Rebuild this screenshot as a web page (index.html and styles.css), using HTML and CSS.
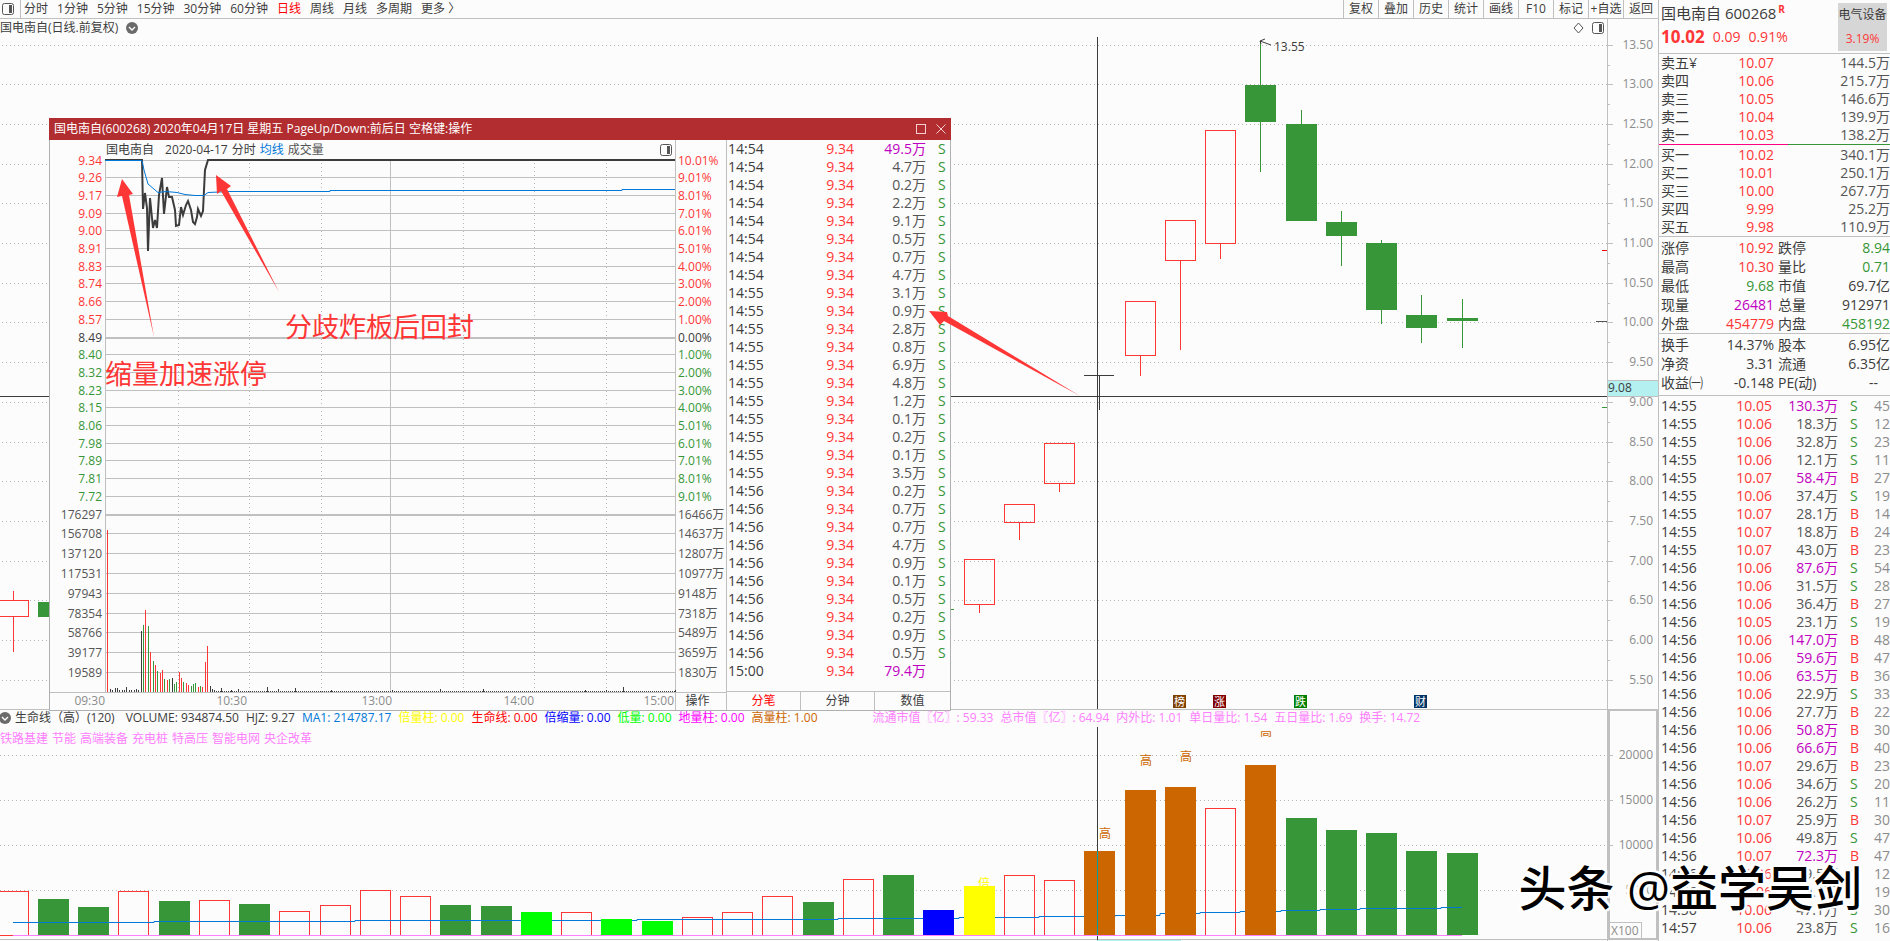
FILE: index.html
```
<!DOCTYPE html>
<html lang="zh-CN">
<head>
    <meta charset="UTF-8">
    <meta name="viewport" content="width=device-width, initial-scale=1.0">
    <title>国电南自 600268</title>
    <link rel="stylesheet" href="styles.css">
</head>
<body>
    <div class="app">

        <!-- Charts -->
        <main class="charts">
            <nav class="toolbar">
                <button class="icon-button" aria-label="侧栏">
                    <svg width="12" height="12" viewBox="0 0 12 12"><rect x="0.5" y="0.5" width="11" height="11" rx="2" fill="none" stroke="#555"/><rect x="7" y="2" width="3" height="8" fill="#555"/></svg>
                </button>
                <div class="periods">
                    <button>分时</button>
                    <button>1分钟</button>
                    <button>5分钟</button>
                    <button>15分钟</button>
                    <button>30分钟</button>
                    <button>60分钟</button>
                    <button class="active">日线</button>
                    <button>周线</button>
                    <button>月线</button>
                    <button>多周期</button>
                    <button>更多 〉</button>
                </div>
                <div class="tools">
                    <button>复权</button>
                    <button>叠加</button>
                    <button>历史</button>
                    <button>统计</button>
                    <button>画线</button>
                    <button>F10</button>
                    <button>标记</button>
                    <button>+自选</button>
                    <button>返回</button>
                </div>
            </nav>

            <section class="kline">
                <div class="plot">
                    <div class="plot-title">
                        <span>国电南自(日线.前复权)</span>
                        <svg width="12" height="12" viewBox="0 0 12 12"><circle cx="6" cy="6" r="6" fill="#6b6b6b"/><path d="M3 5l3 3 3-3" fill="none" stroke="#fff" stroke-width="1.4"/></svg>
                        <span class="plot-icons">
                            <svg width="11" height="12" viewBox="0 0 11 12"><path d="M5.5 1L10 6 5.5 11 1 6z" fill="none" stroke="#555"/></svg>
                            <svg width="12" height="12" viewBox="0 0 12 12"><rect x="0.5" y="0.5" width="11" height="11" rx="2" fill="none" stroke="#555"/><rect x="7" y="2" width="3" height="8" fill="#555"/></svg>
                        </span>
                    </div>
                    <svg class="canvas" id="kline"></svg>
                </div>
                <svg class="axis" id="klineAxis"></svg>
            </section>

            <section class="volume">
                <div class="plot">
                    <div class="indicator">
                        <svg width="12" height="12" viewBox="0 0 12 12"><circle cx="5" cy="6" r="6" fill="#6b6b6b"/><path d="M2 5l3 3 3-3" fill="none" stroke="#fff" stroke-width="1.4"/></svg>
                        <span class="name">生命线（高）(120)</span>
                        <span>VOLUME: 934874.50</span>
                        <span>HJZ: 9.27</span>
                        <span class="blue">MA1: 214787.17</span>
                        <span class="yellow">倍量柱: 0.00</span>
                        <span class="pure-red">生命线: 0.00</span>
                        <span class="pure-blue">倍缩量: 0.00</span>
                        <span class="lime">低量: 0.00</span>
                        <span class="magenta">地量柱: 0.00</span>
                        <span class="orange">高量柱: 1.00</span>
                        <span class="pink market">流通市值〖亿〗: 59.33</span>
                        <span class="pink">总市值〖亿〗: 64.94</span>
                        <span class="pink">内外比: 1.01</span>
                        <span class="pink">单日量比: 1.54</span>
                        <span class="pink">五日量比: 1.69</span>
                        <span class="pink">换手: 14.72</span>
                    </div>
                    <div class="sectors pink">
                        <span>铁路基建</span>
                        <span>节能</span>
                        <span>高端装备</span>
                        <span>充电桩</span>
                        <span>特高压</span>
                        <span>智能电网</span>
                        <span>央企改革</span>
                    </div>
                    <svg class="canvas" id="volume"></svg>
                </div>
                <svg class="axis volume-axis" id="volumeAxis"></svg>
            </section>

            <!-- Intraday window -->
            <div class="popup">
                <div class="popup-title">
                    <span>国电南自(600268) 2020年04月17日 星期五 PageUp/Down:前后日 空格键:操作</span>
                    <button aria-label="最大化"><svg width="10" height="10" viewBox="0 0 10 10"><rect x="0.5" y="0.5" width="9" height="9" fill="none" stroke="#f3cfcf"/></svg></button>
                    <button aria-label="关闭"><svg width="10" height="10" viewBox="0 0 10 10"><path d="M0.5 0.5l9 9M9.5 0.5l-9 9" fill="none" stroke="#f3cfcf"/></svg></button>
                </div>
                <div class="popup-body">
                    <div class="intraday">
                        <div class="legend">
                            <span class="stock">国电南自</span>
                            <span>2020-04-17</span>
                            <span>分时</span>
                            <span class="blue">均线</span>
                            <span class="grey">成交量</span>
                            <svg width="12" height="12" viewBox="0 0 12 12"><rect x="0.5" y="0.5" width="11" height="11" rx="2" fill="none" stroke="#555"/><rect x="7" y="2" width="3" height="8" fill="#555"/></svg>
                        </div>
                        <svg class="intraday-canvas" id="intraday"></svg>
                        <div class="operate"><button>操作</button></div>
                    </div>
                    <div class="popup-list">
                        <table class="ticks" id="popupTicks"></table>
                        <div class="tabs">
                            <button class="active">分笔</button>
                            <button>分钟</button>
                            <button>数值</button>
                        </div>
                    </div>
                </div>
            </div>

            <svg class="notes" id="notes"></svg>
        </main>

        <!-- Quote panel -->
        <aside class="quote">
            <header class="quote-head">
                <div>
                    <div class="stock-name">国电南自 600268<sup>R</sup></div>
                    <div class="price"><b>10.02</b><span>0.09</span><span>0.91%</span></div>
                </div>
                <div class="industry">
                    <span>电气设备</span>
                    <span class="red">3.19%</span>
                </div>
            </header>
            <table class="orders" id="sell"></table>
            <div class="ratio"></div>
            <table class="orders" id="buy"></table>
            <table class="stats">
                <tr><td>涨停</td><td class="red">10.92</td><td>跌停</td><td class="green">8.94</td></tr>
                <tr><td>最高</td><td class="red">10.30</td><td>量比</td><td class="green">0.71</td></tr>
                <tr><td>最低</td><td class="green">9.68</td><td>市值</td><td>69.7亿</td></tr>
                <tr><td>现量</td><td class="purple">26481</td><td>总量</td><td>912971</td></tr>
                <tr><td>外盘</td><td class="red">454779</td><td>内盘</td><td class="green">458192</td></tr>
            </table>
            <table class="stats last">
                <tr><td>换手</td><td>14.37%</td><td>股本</td><td>6.95亿</td></tr>
                <tr><td>净资</td><td>3.31</td><td>流通</td><td>6.35亿</td></tr>
                <tr><td>收益㈠</td><td>-0.148</td><td>PE(动)</td><td class="none">--</td></tr>
            </table>
            <table class="ticks" id="quoteTicks"></table>
        </aside>

        <div class="watermark">头条 @益学吴剑</div>
    </div>

    <script src="script.js"></script>
</body>
</html>
```

FILE: styles.css
```
* {
  box-sizing: border-box;
}

body {
  margin: 0;
  background-color: #fcfcfc;
  color: #3c3c3c;
  font-family: "Open Sans", "Noto Sans CJK SC", sans-serif;
  font-size: 12px;
  line-height: 18px;
  overflow: hidden;
}

button {
  margin: 0;
  padding: 0;
  border: none;
  background: none;
  color: inherit;
  font: inherit;
  white-space: nowrap;
  cursor: pointer;
}

svg {
  display: block;
  flex: none;
}

table {
  border-collapse: collapse;
  table-layout: fixed;
}

td {
  padding: 0;
  white-space: nowrap;
}

.app {
  position: relative;
  display: grid;
  grid-template-columns: minmax(0, 1fr) 232px;
  height: 100vh;
  overflow: hidden;
}

/* Colors */
.red { color: #ff3636; }
.green { color: #379637; }
.purple { color: #c000c0; }
.grey { color: #555; }
.blue { color: #0078d7; }
.yellow { color: #ffff00; }
.lime { color: #00ff00; }
.magenta { color: #ff00ff; }
.orange { color: #cc6600; }
.pink { color: #ff80ff; }
.pure-red { color: #ff0000; }
.pure-blue { color: #0000ff; }

/* Charts column */
.charts {
  position: relative;
  display: flex;
  flex-direction: column;
  min-width: 0;
}

.toolbar {
  display: flex;
  height: 19px;
  border-bottom: 1px solid #c0c0c0;
  line-height: 16px;
}

.icon-button {
  width: 21px;
  padding: 0 2px;
  border-right: 1px solid #c0c0c0;
}

.periods {
  display: flex;
  gap: 9px;
  margin-left: 3px;
}

.tools {
  display: flex;
  margin-left: auto;
}

.tools button {
  width: 35px;
  border-left: 1px solid #c0c0c0;
}

.active {
  color: #ff0000;
}

.kline,
.volume {
  display: flex;
  overflow: hidden;
}

.kline {
  flex: 1;
  min-height: 0;
}

.volume {
  height: 232px;
  border-top: 1px solid #c0c0c0;
}

.plot {
  position: relative;
  flex: 1;
  min-width: 0;
}

.canvas {
  position: absolute;
  top: 0;
  left: 0;
  width: 100%;
  height: 100%;
}

.axis {
  width: 51px;
  height: 100%;
  border-left: 1px solid #c0c0c0;
}

.plot-title {
  display: flex;
  align-items: center;
  gap: 8px;
}

.plot-icons {
  display: flex;
  gap: 8px;
  margin: 0 3px 0 auto;
}

.indicator {
  display: flex;
  align-items: center;
  gap: 7px;
  height: 15px;
  white-space: nowrap;
}

.indicator .name {
  margin: 0 4px 0 -4px;
}

.indicator .market {
  margin-left: 48px;
}

.sectors {
  display: flex;
  gap: 4px;
  line-height: 28px;
}

/* Intraday window */
.popup {
  position: absolute;
  top: 118px;
  left: 49px;
  width: 902px;
  background-color: #fcfcfc;
  border: 1px solid #b0b0b0;
  border-top: none;
}

.popup-title {
  display: flex;
  align-items: center;
  height: 22px;
  margin: 0 -1px;
  padding-left: 5px;
  background-color: #b22d30;
  color: #fff;
}

.popup-title span {
  flex: 1;
}

.popup-title button {
  width: 20px;
  padding: 0 5px;
}

.popup-body {
  display: grid;
  grid-template-columns: 676px 1fr;
}

.legend {
  display: flex;
  align-items: center;
  gap: 4px;
  height: 20px;
  padding-left: 56px;
}

.legend .stock {
  margin-right: 7px;
}

.legend svg {
  margin: 0 54px 0 auto;
}

.intraday-canvas {
  width: 676px;
  height: 532px;
  overflow: visible;
}

.operate {
  display: flex;
  justify-content: flex-end;
  height: 18px;
}

.operate button {
  width: 51px;
  padding-right: 6px;
}

.popup-list {
  display: flex;
  flex-direction: column;
  border-left: 1px solid #c0c0c0;
}

.tabs {
  display: grid;
  grid-template-columns: 73px 74px 1fr;
  height: 19px;
  margin-top: auto;
  border-top: 1px solid #c0c0c0;
}

.tabs button + button {
  border-left: 1px solid #c0c0c0;
}

/* Tick tables */
.ticks {
  font-size: 14px;
}

.ticks tr {
  height: 18px;
}

.ticks td {
  line-height: 18px;
}

.ticks .price-cell,
.ticks .amount-cell {
  text-align: right;
}

.ticks .side-cell {
  padding-left: 12px;
}

#popupTicks {
  width: 223px;
}

#popupTicks .time-cell {
  width: 57px;
  padding-left: 1px;
}

#popupTicks .price-cell {
  width: 70px;
}

#popupTicks .amount-cell {
  width: 72px;
}

#quoteTicks {
  width: 229px;
}

#quoteTicks .time-cell {
  width: 51px;
}

#quoteTicks .price-cell {
  width: 60px;
}

#quoteTicks .amount-cell {
  width: 66px;
}

#quoteTicks .side-cell {
  width: 28px;
}

.count-cell {
  padding-left: 8px;
  color: #8c8c8c;
}

/* Quote panel */
.quote {
  border-left: 1px solid #c0c0c0;
  font-size: 14px;
  overflow: hidden;
}

.quote table {
  margin-left: 2px;
}

.quote-head {
  display: flex;
  justify-content: space-between;
  height: 54px;
  padding: 3px 3px 0 2px;
  border-bottom: 1px solid #c0c0c0;
}

.stock-name {
  font-size: 15px;
  line-height: 20px;
}

.stock-name sup {
  margin-left: 2px;
  color: #ff3636;
  font-size: 10px;
  font-weight: bold;
  line-height: 10px;
}

.price {
  display: flex;
  align-items: center;
  gap: 8px;
  height: 28px;
  color: #ff3636;
}

.price b {
  font-size: 17px;
}

.industry {
  display: flex;
  flex-direction: column;
  justify-content: space-between;
  align-items: center;
  width: 49px;
  height: 48px;
  padding: 3px 0;
  background-color: #d6d6d6;
  font-size: 12px;
}

.orders {
  width: 229px;
}

.orders tr {
  height: 18px;
}

.orders td:nth-child(2) {
  width: 60px;
  text-align: right;
}

.orders td:first-child {
  width: 53px;
}

.orders td:last-child {
  text-align: right;
}

.ratio {
  height: 1px;
  margin-bottom: 1px;
  background: linear-gradient(to right, #ff0080 56%, #379637 56%);
}

.stats {
  width: 229px;
  line-height: 19px;
}

.stats tr {
  height: 19px;
}

.stats td:nth-child(odd) {
  width: 51px;
}

.stats td:nth-child(2) {
  width: 62px;
  text-align: right;
}

.stats td:nth-child(3) {
  padding-left: 4px;
}

.stats td:nth-child(4) {
  text-align: right;
}

.stats td.none {
  padding-right: 12px;
}

#buy,
.stats {
  position: relative;
}

#buy::after,
.stats::after {
  content: "";
  position: absolute;
  left: -2px;
  right: 0;
  bottom: -1px;
  height: 1px;
  background-color: #c0c0c0;
}

#buy,
.stats {
  margin-bottom: 2px;
}

.stats.last {
  margin-bottom: 5px;
}

.stats.last::after {
  bottom: -4px;
}

/* Overlays */
.notes {
  position: absolute;
  top: 0;
  left: 0;
  width: 100%;
  height: 100%;
  pointer-events: none;
}

.watermark {
  position: absolute;
  right: 28px;
  bottom: 18px;
  color: #000;
  font-size: 48px;
  font-weight: 500;
  line-height: 70px;
  text-shadow: 2px 2px 1px #fff, -2px -2px 1px #fff, 2px -2px 1px #fff, -2px 2px 1px #fff, 3px 0 1px #fff, -3px 0 1px #fff;
  white-space: nowrap;
}
```

FILE: script.js
```
const RED = "#ff3636";
const GREEN = "#379637";
const LINE = "#c0c0c0";
const DARK = "#3c3c3c";
const BLUE = "#0078d7";
const ORANGE = "#cc6600";

const BAR_WIDTH = 31;
const BAR_STEP = 40.25;

function rect(x, y, w, h, fill) {
  return `<rect x="${x}" y="${y}" width="${w}" height="${h}" fill="${fill}"/>`;
}

function box(x, y, w, h, stroke) {
  return `<rect x="${x + 0.5}" y="${y + 0.5}" width="${w - 1}" height="${h - 1}" fill="none" stroke="${stroke}"/>`;
}

function dots(x1, y1, x2, y2) {
  return `<line x1="${x1}" y1="${y1}" x2="${x2}" y2="${y2}" stroke="#b8b8b8" stroke-dasharray="1 3"/>`;
}

function text(x, y, value, fill, anchor = "start", size = 12) {
  return `<text x="${x}" y="${y}" fill="${fill}" text-anchor="${anchor}" font-size="${size}">${value}</text>`;
}

function poly(points, stroke, width = 1) {
  return `<polyline points="${points}" fill="none" stroke="${stroke}" stroke-width="${width}"/>`;
}

// Shift a drawing made in window coordinates into its own svg
function draw(id, x, y, content) {
  document.getElementById(id).innerHTML = `<g transform="translate(${-x} ${-y})">${content}</g>`;
}

function barLeft(i) {
  return Math.floor(-2 + i * BAR_STEP);
}

/* Daily candles: index, high, body top, body bottom, low, up or down */
const candles = [
  [0, 591, 600, 617, 652, "up"],
  [1, 602, 602, 617, 617, "down"],
  [24, 559, 559, 605, 613, "up"],
  [25, 504, 504, 523, 540, "up"],
  [26, 443, 443, 484, 492, "up"],
  [28, 301, 301, 356, 376, "up"],
  [29, 220, 220, 261, 350, "up"],
  [30, 130, 130, 244, 259, "up"],
  [31, 41, 85, 122, 172, "down"],
  [32, 110, 124, 221, 221, "down"],
  [33, 211, 222, 236, 266, "down"],
  [34, 240, 243, 310, 324, "down"],
  [35, 295, 315, 328, 343, "down"],
  [36, 299, 318, 321, 348, "down"]
];

const badges = [
  [1173, "榜", "#804000"],
  [1213, "涨", "#800000"],
  [1294, "跌", "#008000"],
  [1414, "财", "#003366"]
];

function drawKline() {
  let out = "";
  let axis = "";

  for (let i = 0; i < 17; i++) {
    const y = Math.floor(45 + i * 39.7) + 0.5;
    out += dots(2, y, 1607, y);
    axis += rect(1608, y - 0.5, 5, 1, LINE);
    axis += text(1653, y + 3.5, (13.5 - i * 0.5).toFixed(2), "#8c8c8c", "end");
    if (i < 16) {
      axis += rect(1608, Math.floor(y + 20), 2, 1, LINE);
    }
  }

  candles.forEach(([i, high, top, bottom, low, type]) => {
    const x = barLeft(i);
    const color = type === "up" ? RED : GREEN;
    out += rect(x + 15, high, 1, top - high, color);
    out += rect(x + 15, bottom, 1, low - bottom, color);
    out += type === "up" ? box(x, top, BAR_WIDTH, bottom - top, color) : rect(x, top, BAR_WIDTH, bottom - top, color);
  });

  // Highest price mark
  out += poly("1265,39 1260,41 1261,44", DARK) + poly("1260,41 1271,45", DARK);
  out += text(1274, 51, "13.55", DARK);

  badges.forEach(([x, label, fill]) => {
    out += rect(x, 695, 13, 13, fill);
    out += text(x + 1, 706, label, "#fff", "start", 11);
  });

  // Limit and last price ticks
  out += rect(1602, 250, 5, 1, "#ff0000");
  out += rect(1596, 321, 11, 1, "#555");
  out += rect(1602, 407, 5, 1, GREEN);
  out += rect(950, 609, 4, 1, GREEN);

  // Crosshair
  out += rect(1097, 37, 1, 673, DARK) + rect(0, 396, 1607, 1, DARK);
  out += rect(1084, 375, 30, 1, DARK) + rect(1099, 376, 1, 34, DARK);

  axis += rect(1608, 380, 50, 17, "#b4f0f0") + rect(1608, 380, 50, 1, LINE);
  axis += rect(1608, 396, 50, 1, LINE);
  axis += text(1608, 392, "9.08", DARK);

  draw("kline", 0, 19, out);
  draw("klineAxis", 1608, 19, axis);
}

/* Volume bars: top, color (no color = hollow red) */
const volumes = [
  [891], [899, GREEN], [907, GREEN], [891], [901, GREEN], [900], [904, GREEN], [911], [905], [890],
  [896], [905, GREEN], [906, GREEN], [912, "#00ff00"], [912], [919, "#00ff00"], [921, "#00ff00"], [917], [912], [896],
  [902, GREEN], [879], [875, GREEN], [910, "#0000ff"], [886, "#ffff00"], [875], [880], [851, ORANGE], [790, ORANGE], [787, ORANGE],
  [808], [765, ORANGE], [818, GREEN], [830, GREEN], [833, GREEN], [851, GREEN], [853, GREEN]
];

function drawVolume() {
  let out = "";
  let marked = "";
  let axis = box(1608, 709, 50, 231, LINE) + box(1609, 710, 48, 229, LINE);

  [20000, 15000, 10000, 5000].forEach((value, i) => {
    const y = 755.5 + i * 45;
    out += dots(0, y, 1607, y);
    axis += rect(1608, y - 0.5, 5, 1, LINE) + rect(1608, y + 22.5, 2, 1, LINE);
    axis += text(1653, y + 3.5, value, "#8c8c8c", "end");
  });

  volumes.forEach(([top, color], i) => {
    const x = barLeft(i);
    if (!color) {
      out += box(x, top, BAR_WIDTH, 936 - top, RED);
    } else if (color === GREEN) {
      out += rect(x, top, BAR_WIDTH, 935 - top, color);
    } else {
      marked += rect(x, top, BAR_WIDTH, 935 - top, color);
    }
  });

  out += poly("13,922.5 154,922.5 154,921.5 355,921.5 355,920.5 637,920.5 637,919.5 838,919.5 838,918.5 959,918.5 959,917.5 1039,917.5 1039,916.5 1115,916.5 1115,915.5 1160,915.5 1160,913.5 1200,913.5 1200,912.5 1240,912.5 1240,911.5 1281,911.5 1281,910.5 1320,910.5 1320,909.5 1360,909.5 1360,908.5 1441,908.5 1441,907.5 1462,907.5", BLUE);
  out += marked;
  out += rect(0, 935, 13, 1, RED) + rect(13, 935, 1449, 1, "#ff80ff");
  out += rect(0, 939, 1607, 1, LINE);

  out += text(978, 888, "倍", "#ffff00");
  out += text(1099, 838, "高", ORANGE) + text(1140, 765, "高", ORANGE) + text(1180, 761, "高", ORANGE);
  // Label of the tallest bar is cut by the header
  out += `<svg x="1255" y="731" width="20" height="6">${text(5, 5, "高", ORANGE)}</svg>`;

  out += rect(1097, 727, 1, 124, DARK) + rect(1097, 851, 1, 84, "#00a0a0") + rect(1097, 936, 1, 5, DARK);
  out += rect(1097, 940, 84, 1, "#b4f0f0");

  axis += box(1609, 922, 33, 17, LINE) + text(1611, 935, "X100", "#8c8c8c");

  draw("volume", 0, 710, out);
  draw("volumeAxis", 1608, 710, axis);
}

/* Intraday chart */
const priceLabels = [
  "9.34", "9.26", "9.17", "9.09", "9.00", "8.91", "8.83", "8.74", "8.66", "8.57",
  "8.49", "8.40", "8.32", "8.23", "8.15", "8.06", "7.98", "7.89", "7.81", "7.72"
];
const percentLabels = [
  "10.01%", "9.01%", "8.01%", "7.01%", "6.01%", "5.01%", "4.00%", "3.00%", "2.00%", "1.00%",
  "0.00%", "1.00%", "2.00%", "3.00%", "4.00%", "5.01%", "6.01%", "7.01%", "8.01%", "9.01%"
];
const volumeLabels = [
  ["176297", "16466万"], ["156708", "14637万"], ["137120", "12807万"], ["117531", "10977万"], ["97943", "9148万"],
  ["78354", "7318万"], ["58766", "5489万"], ["39177", "3659万"], ["19589", "1830万"]
];
const minuteBars = [
  [107, 530, RED], [110, 689, DARK], [112, 690, DARK], [115, 688, DARK], [117, 688, DARK], [119, 690, DARK], [122, 690, DARK], [124, 690, DARK],
  [126, 687, DARK], [129, 690, DARK], [131, 690, DARK], [134, 690, DARK], [136, 689, DARK], [138, 690, DARK],
  [141, 631, DARK], [143, 625, GREEN], [145, 610, RED], [148, 626, GREEN], [150, 652, RED], [153, 661, GREEN],
  [155, 665, RED], [157, 671, GREEN], [160, 673, RED], [162, 670, RED], [164, 679, GREEN], [167, 680, RED], [169, 679, GREEN],
  [172, 678, DARK], [174, 684, GREEN], [176, 682, GREEN], [179, 672, RED], [181, 678, RED], [183, 682, GREEN], [186, 683, RED],
  [188, 685, RED], [191, 686, GREEN], [193, 684, GREEN], [195, 683, GREEN], [198, 687, RED], [200, 686, GREEN], [202, 687, RED],
  [205, 662, RED], [207, 646, RED], [210, 686, DARK], [212, 689, DARK], [214, 690, DARK], [221, 688, DARK], [231, 690, DARK], [238, 689, DARK],
  [267, 687, DARK], [278, 689, DARK], [295, 688, DARK], [331, 690, DARK], [392, 690, DARK], [440, 689, DARK], [483, 689, DARK],
  [585, 690, DARK], [606, 690, DARK], [623, 687, DARK], [675, 690, DARK]
];

function drawIntraday() {
  let out = "";

  priceLabels.forEach((label, i) => {
    const y = Math.floor(160 + i * 17.7);
    const color = i < 10 ? RED : i === 10 ? DARK : GREEN;
    out += rect(106, y, 569, i === 10 ? 2 : 1, LINE);
    out += text(102, y + 5, label, color, "end") + text(678, y + 5, percentLabels[i], color);
  });

  volumeLabels.forEach(([left, right], i) => {
    const y = Math.floor(514 + i * 19.8);
    out += rect(106, y, 569, i === 0 ? 2 : 1, LINE);
    out += text(102, y + 5, left, "#555", "end") + text(678, y + 5, right, "#555");
  });

  [178.5, 249.5, 321.5, 463.5, 534.5, 606.5].forEach(x => {
    out += dots(x, 163, x, 692);
  });
  out += rect(390, 160, 1, 532, LINE) + rect(105, 160, 1, 532, LINE);
  out += rect(675, 140, 1, 570, LINE) + rect(50, 692, 676, 1, LINE);

  minuteBars.forEach(([x, top, color]) => {
    out += rect(x, top, 1, 692 - top, color);
  });
  out += `<line x1="214" y1="691.5" x2="675" y2="691.5" stroke="${DARK}" stroke-dasharray="1 1"/>`;

  out += poly("105,160 142,160 143,209 145,193 147,208 148,251 150,198 153,228 155,220 157,228 159,195 162,178 164,214 167,187 169,197 172,197 175,210 176,226 179,225 181,207 183,215 186,205 188,201 191,210 193,222 195,224 197,217 198,209 201,216 203,211 204,190 205,170 208,160 675,160", DARK, 2);
  out += poly("105,160.5 142,160.5 144,170 148,184 158,192.5 166,191.5 177,192.5 185,194.5 195,195.5 204,195.5 208,192.5 230,191.5 330,191.5 330,190.5 622,190.5 622,189.5 675,189.5", BLUE);

  [[105, "09:30"], [247, "10:30"], [392, "13:00"], [534, "14:00"], [674, "15:00"]].forEach(([x, label]) => {
    out += text(x, 705, label, "#8c8c8c", "end");
  });

  draw("intraday", 50, 160, out);
}

function drawNotes() {
  const arrow = points => `<polygon points="${points}" fill="${RED}"/>`;
  let out = "";
  out += arrow("122,179 133,194 129,195 154,337 122,196 117,197");
  out += arrow("216,175 231,186 227,189 279,292 221,191 217,194");
  out += arrow("929,311 947,312 948,316 1080,396 944,321 940,325");
  out += text(285, 337, "分歧炸板后回封", RED, "start", 27);
  out += text(105, 384, "缩量加速涨停", RED, "start", 27);
  draw("notes", 0, 0, out);
}

/* Tables */
function tickRow([time, price, amount, side, count]) {
  const big = parseFloat(amount) >= 49.9 || amount === "49.5";
  const sideClass = side === "B" ? "red" : "green";
  return `<tr><td class="time-cell">${time}</td><td class="price-cell red">${price}</td>` +
    `<td class="amount-cell ${big ? "purple" : "grey"}">${amount}万</td><td class="side-cell ${sideClass}">${side}</td>` +
    (count ? `<td class="count-cell">${count}</td>` : "") + "</tr>";
}

const popupAmounts = [
  ["14:54", "49.5 4.7 0.2 2.2 9.1 0.5 0.7 4.7"],
  ["14:55", "3.1 0.9 2.8 0.8 6.9 4.8 1.2 0.1 0.2 0.1 3.5"],
  ["14:56", "0.2 0.7 0.7 4.7 0.9 0.1 0.5 0.2 0.9 0.5"]
];

const quoteTicks = `14:55 10.05 130.3 S 45
14:55 10.06 18.3 S 12
14:55 10.06 32.8 S 23
14:55 10.06 12.1 S 11
14:55 10.07 58.4 B 27
14:55 10.06 37.4 S 19
14:55 10.07 28.1 B 14
14:55 10.07 18.8 B 24
14:55 10.07 43.0 B 23
14:56 10.06 87.6 S 54
14:56 10.06 31.5 S 28
14:56 10.06 36.4 B 27
14:56 10.05 23.1 S 19
14:56 10.06 147.0 B 48
14:56 10.06 59.6 B 47
14:56 10.06 63.5 B 36
14:56 10.06 22.9 S 33
14:56 10.06 27.7 B 22
14:56 10.06 50.8 B 30
14:56 10.06 66.6 B 40
14:56 10.07 29.6 B 23
14:56 10.06 34.6 S 20
14:56 10.06 26.2 S 11
14:56 10.07 25.9 B 30
14:56 10.06 49.8 S 47
14:56 10.07 72.3 B 47
14:56 10.06 19.5 S 12
14:56 10.06 20.1 S 19
14:56 10.06 47.1 S 30
14:57 10.06 23.8 S 16`;

function fillTables() {
  let rows = "";
  popupAmounts.forEach(([time, amounts]) => {
    amounts.split(" ").forEach(amount => {
      rows += tickRow([time, "9.34", amount, "S"]);
    });
  });
  rows += tickRow(["15:00", "9.34", "79.4", ""]);
  document.getElementById("popupTicks").innerHTML = rows;

  document.getElementById("quoteTicks").innerHTML = quoteTicks.split("\n").map(line => tickRow(line.split(" "))).join("");

  const orderRow = ([name, price, amount]) =>
    `<tr><td>${name}</td><td class="red">${price}</td><td class="grey">${amount}万</td></tr>`;
  document.getElementById("sell").innerHTML = [
    ["卖五¥", "10.07", "144.5"], ["卖四", "10.06", "215.7"], ["卖三", "10.05", "146.6"], ["卖二", "10.04", "139.9"], ["卖一", "10.03", "138.2"]
  ].map(orderRow).join("");
  document.getElementById("buy").innerHTML = [
    ["买一", "10.02", "340.1"], ["买二", "10.01", "250.1"], ["买三", "10.00", "267.7"], ["买四", "9.99", "25.2"], ["买五", "9.98", "110.9"]
  ].map(orderRow).join("");
}

drawKline();
drawVolume();
drawIntraday();
drawNotes();
fillTables();
```
